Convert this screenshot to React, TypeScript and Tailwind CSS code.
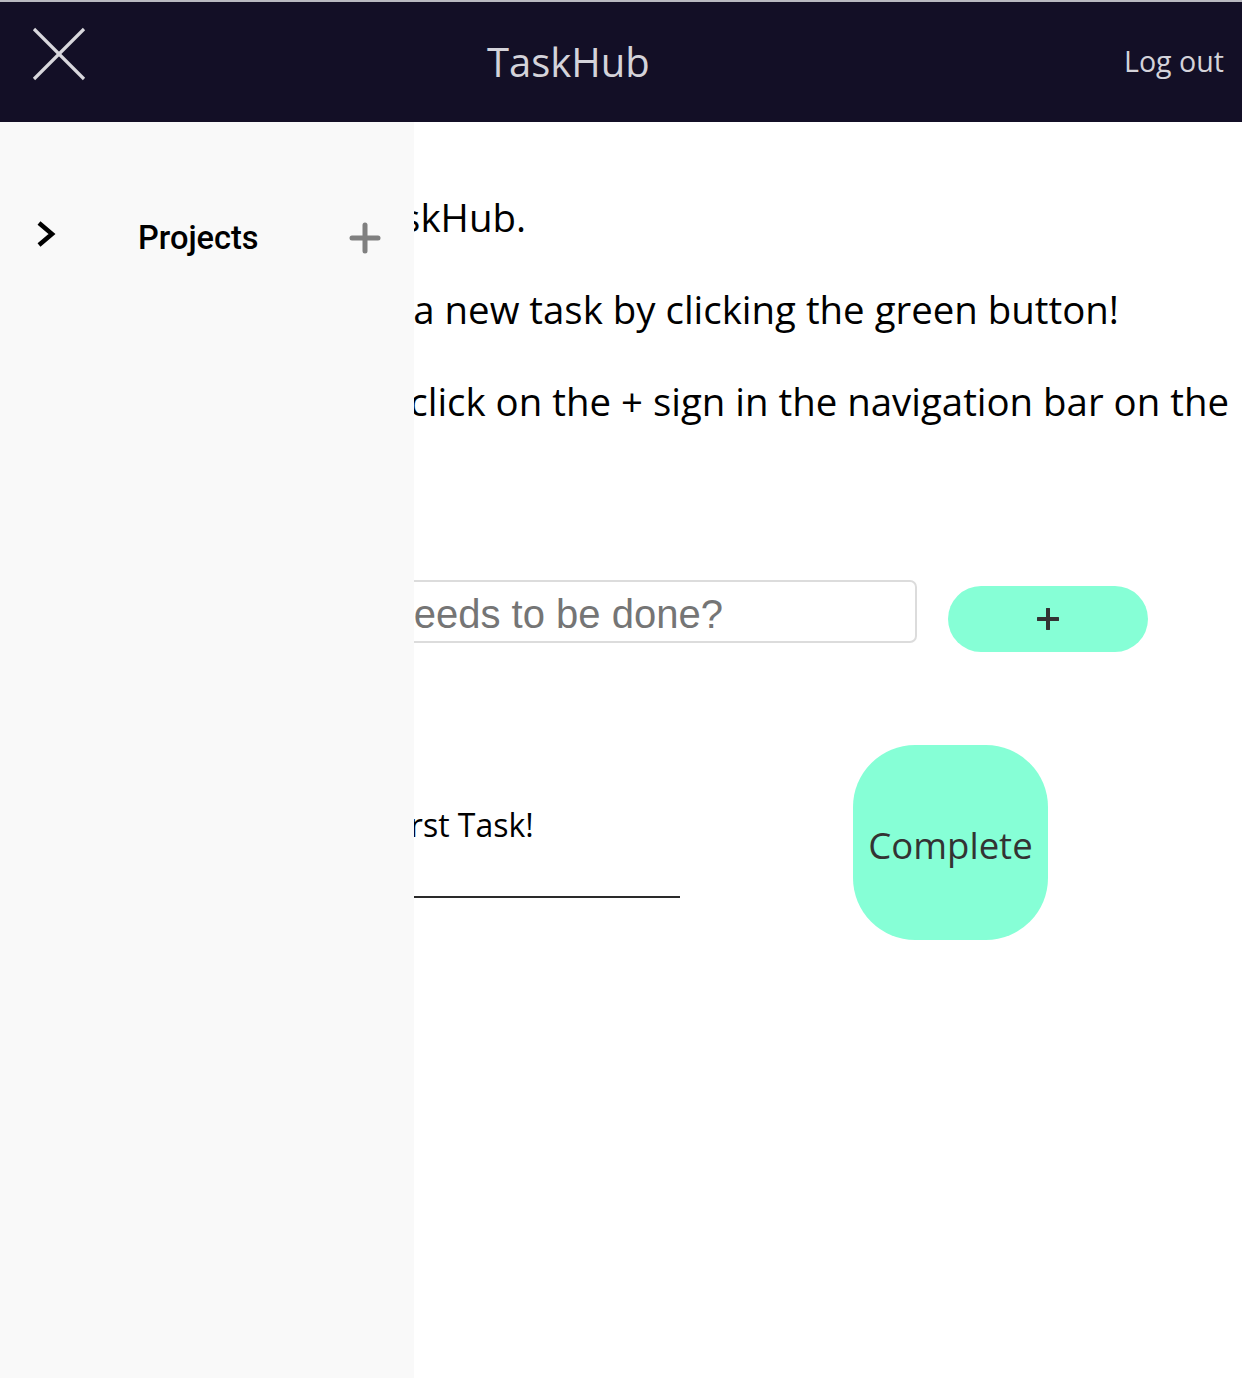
import React from "react";

export default function App() {
  return (
    <div className="relative w-full h-[1378px] overflow-hidden bg-white font-['Open_Sans',sans-serif]">
      {/* Header */}
      <header className="flex h-[122px] border-t-2 border-[#b9b9c0] bg-[#130f26] text-[#d4d3da]">
        <button className="ml-[31px] mt-[24px] self-start" aria-label="Close menu">
          <svg width="56" height="56" viewBox="0 0 56 56">
            <line x1="3" y1="3" x2="53" y2="53" stroke="#d9d8dd" strokeWidth="3.2" />
            <line x1="53" y1="3" x2="3" y2="53" stroke="#d9d8dd" strokeWidth="3.2" />
          </svg>
        </button>
        <div className="ml-[400px] self-center text-[40px] leading-[52px]">TaskHub</div>
        <div className="ml-auto mr-[18px] self-center text-[28.6px] leading-[40px] -mt-[2px]">Log out</div>
      </header>

      {/* Main content */}
      <main className="pt-[69px] text-[38.4px] leading-[52px] text-black">
        <p className="w-[526px] text-right whitespace-nowrap">Welcome to TaskHub.</p>
        <p className="mt-[40px] w-[1119px] text-right whitespace-nowrap">Create a new task by clicking the green button!</p>
        <p className="mt-[40px] w-[1229px] text-right whitespace-nowrap">To create a project, click on the + sign in the navigation bar on the</p>
        <p className="w-[400px] text-right whitespace-nowrap">left.</p>

        <div className="mt-[101px] flex items-start">
          <input
            className="ml-[273px] h-[63px] w-[644px] rounded-[7px] border-2 border-[#dcdcdc] bg-white pl-[12px] pt-[6px] text-[40px] font-['Liberation_Sans',Arial,sans-serif] text-black outline-none placeholder:text-[#757575]"
            placeholder="What needs to be done?"
          />
          <button className="ml-[31px] mt-[6px] flex h-[66px] w-[200px] items-center justify-center rounded-full bg-[#86ffd6]" aria-label="Add task">
            <svg width="22" height="22" viewBox="0 0 22 22">
              <line x1="11" y1="1" x2="11" y2="21" stroke="#333" strokeWidth="4" strokeLinecap="round" />
              <line x1="1" y1="11" x2="21" y2="11" stroke="#333" strokeWidth="4" strokeLinecap="round" />
            </svg>
          </button>
        </div>

        <div className="mt-[93px] flex items-start">
          <div className="ml-[239px] w-[441px] border-b-2 border-[#2a2a2a] pt-[58px] pb-[49px]">
            <div className="h-[44px] text-center text-[32px] leading-[44px]">First Task!</div>
          </div>
          <button className="ml-[173px] flex h-[195px] w-[195px] items-center justify-center rounded-[62px] bg-[#86ffd6] pt-[4px] text-[36.5px] text-[#333333]">
            Complete
          </button>
        </div>
      </main>

      {/* Sidebar overlay */}
      <aside className="absolute left-0 top-[122px] bottom-0 w-[414px] bg-[#f9f9f9]">
        <div className="mt-[96px] flex h-[40px] items-center">
          <svg className="ml-[36px] mb-[8px]" width="20" height="26" viewBox="0 0 20 26">
            <polyline points="3,2 16,13 3,24" fill="none" stroke="#000" strokeWidth="4.5" />
          </svg>
          <span className="ml-[82px] text-[32.6px] font-medium leading-[40px] text-black font-['Roboto','Liberation_Sans',sans-serif]">Projects</span>
          <svg className="ml-[90px]" width="32" height="32" viewBox="0 0 32 32">
            <line x1="16" y1="3" x2="16" y2="29" stroke="#808080" strokeWidth="5" strokeLinecap="round" />
            <line x1="3" y1="16" x2="29" y2="16" stroke="#808080" strokeWidth="5" strokeLinecap="round" />
          </svg>
        </div>
      </aside>
    </div>
  );
}
